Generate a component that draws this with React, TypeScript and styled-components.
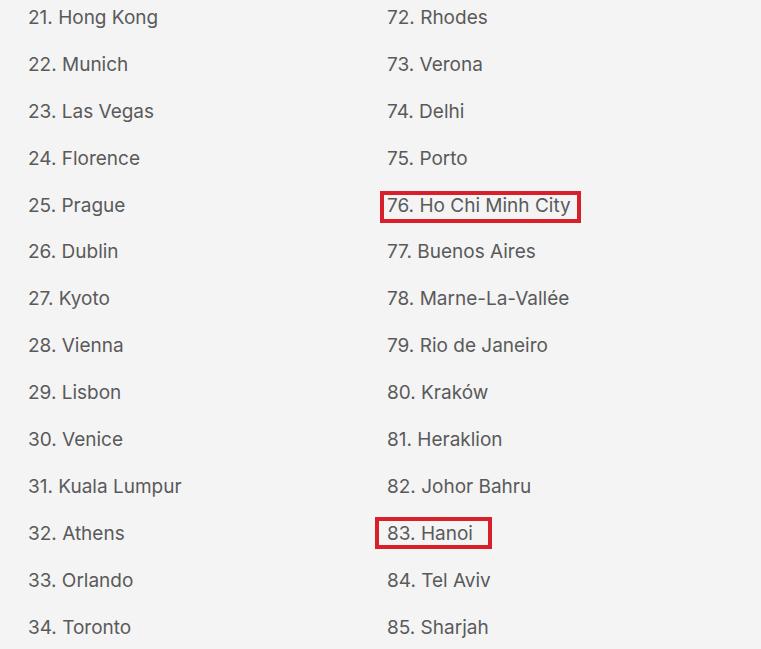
import styled, { createGlobalStyle } from 'styled-components';

const GlobalStyle = createGlobalStyle`
    html, body {
        margin: 0;
        padding: 0;
        background: #f4f4f4;
    }
`;

const Page = styled.main`
    width: 761px;
    height: 649px;
    overflow: hidden;
    background: #f4f4f4;
    font-family: Inter, "Noto Sans", sans-serif;
`;

const Columns = styled.div`
    display: grid;
    grid-template-columns: 359px 1fr;
    padding-left: 28px;
    margin-top: -6px;
`;

const List = styled.ol`
    list-style: none;
    margin: 0;
    padding: 0;
`;

const Item = styled.li`
    position: relative;
    height: 46.9px;
    display: flex;
    align-items: center;
    font-size: 19px;
    color: #5a5a5a;
`;

const Marker = styled.span<{ $left: number; $top: number; $width: number }>`
    position: absolute;
    left: ${p => p.$left}px;
    top: ${p => p.$top}px;
    width: ${p => p.$width}px;
    height: 32px;
    border: 4px solid #d9202a;
    box-sizing: border-box;
    pointer-events: none;
`;

const left = [
    'Hong Kong', 'Munich', 'Las Vegas', 'Florence', 'Prague', 'Dublin', 'Kyoto',
    'Vienna', 'Lisbon', 'Venice', 'Kuala Lumpur', 'Athens', 'Orlando', 'Toronto',
];

const right = [
    'Rhodes', 'Verona', 'Delhi', 'Porto', 'Ho Chi Minh City', 'Buenos Aires',
    'Marne-La-Vallée', 'Rio de Janeiro', 'Kraków', 'Heraklion', 'Johor Bahru',
    'Hanoi', 'Tel Aviv', 'Sharjah',
];

// hand-drawn highlight boxes, not quite the same on each row
const marked: Record<number, { left: number; top: number; width: number }> = {
    76: { left: -7, top: 9, width: 201 },
    83: { left: -12, top: 7, width: 117 },
};

const CityList = ({ start, cities }: { start: number; cities: string[] }) => (
    <List>
        {cities.map((city, i) => {
            const n = start + i;
            const m = marked[n];
            return (
                <Item key={n}>
                    {`${n}. ${city}`}
                    {m && <Marker $left={m.left} $top={m.top} $width={m.width} />}
                </Item>
            );
        })}
    </List>
);

const App = () => (
    <Page>
        <GlobalStyle />
        <Columns>
            <CityList start={21} cities={left} />
            <CityList start={72} cities={right} />
        </Columns>
    </Page>
);

export default App;
